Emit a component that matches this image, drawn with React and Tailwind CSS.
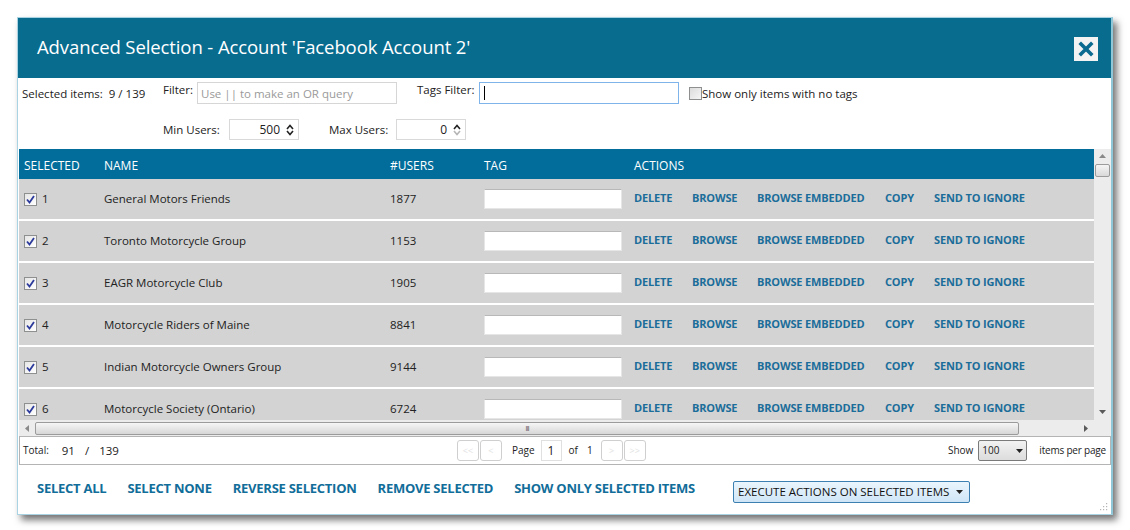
import { useState } from 'react';

const ROWS = [
  { id: 1, name: 'General Motors Friends', users: 1877 },
  { id: 2, name: 'Toronto Motorcycle Group', users: 1153 },
  { id: 3, name: 'EAGR Motorcycle Club', users: 1905 },
  { id: 4, name: 'Motorcycle Riders of Maine', users: 8841 },
  { id: 5, name: 'Indian Motorcycle Owners Group', users: 9144 },
  { id: 6, name: 'Motorcycle Society (Ontario)', users: 6724 },
];
const ACTIONS = [
  { label: 'DELETE', w: 'w-[58px]' },
  { label: 'BROWSE', w: 'w-[65px]' },
  { label: 'BROWSE EMBEDDED', w: 'w-[128px]' },
  { label: 'COPY', w: 'w-[49px]' },
  { label: 'SEND TO IGNORE', w: 'w-[100px]' },
];
const FOOT_LINKS = ['SELECT ALL', 'SELECT NONE', 'REVERSE SELECTION', 'REMOVE SELECTED', 'SHOW ONLY SELECTED ITEMS'];

const font = { fontFamily: '"Open Sans", "Noto Sans", sans-serif' };

function Check() {
  return (
    <span className="w-[13px] h-[13px] border border-[#8e8f8f] bg-gradient-to-br from-[#e6e6e6] to-white flex items-center justify-center">
      <svg width="9" height="9" viewBox="0 0 9 9">
        <path d="M1 4.5 L3.5 7.5 L8 1" fill="none" stroke="#2b3a9b" strokeWidth="1.8" />
      </svg>
    </span>
  );
}

function Spinner({ value, dimDown }) {
  return (
    <div className="w-[70px] h-[21px] border border-[#d9d9d9] bg-white flex items-center justify-end pr-[4px] text-[12px] text-[#222]">
      <span className="mr-[6px]">{value}</span>
      <div className="flex flex-col items-center leading-none">
        <svg width="8" height="6" viewBox="0 0 8 6"><path d="M1 5 L4 1.5 L7 5" fill="none" stroke="#222" strokeWidth="1.6" /></svg>
        <svg width="8" height="6" viewBox="0 0 8 6"><path d="M1 1 L4 4.5 L7 1" fill="none" stroke={dimDown ? '#b5b5b5' : '#222'} strokeWidth="1.6" /></svg>
      </div>
    </div>
  );
}

function PagerBtn({ children }) {
  return (
    <span className="w-[22px] h-[21px] border border-[#cfcfcf] rounded-[3px] text-[9px] text-[#e2e2e2] flex items-center justify-center">{children}</span>
  );
}

export default function App() {
  const [tags] = useState('');
  return (
    <div className="w-[1130px] h-[530px] bg-white pt-[17px] pl-[17px] text-[#222]" style={font}>
      <div className="w-[1096px] h-[498px] border border-[#a9d3e2] border-r-2 border-r-[#8fc7d9] shadow-[4px_5px_7px_rgba(0,0,0,0.55)] bg-white flex flex-col">
        {/* Title bar */}
        <div className="h-[60px] bg-[#086c8f] flex items-center justify-between pl-[19px] pr-[13px] shrink-0">
          <h1 className="text-[18.5px] text-white tracking-[-0.1px] -mt-[3px]">Advanced Selection - Account 'Facebook Account 2'</h1>
          <button className="w-[24px] h-[24px] bg-[#f3f3f3] flex items-center justify-center mt-[1px]">
            <svg width="16" height="16" viewBox="0 0 16 16">
              <path d="M3 3 L13 13 M13 3 L3 13" stroke="#0b6a8f" strokeWidth="3.6" strokeLinecap="square" />
            </svg>
          </button>
        </div>

        {/* Filters */}
        <div className="h-[71px] shrink-0 text-[11.5px] relative">
          <div className="flex items-start pt-[4px]">
            <span className="ml-[4px] mt-[3px] w-[141px]">Selected items:&nbsp; 9 / 139</span>
            <span className="-mt-[1px] w-[34px]">Filter:</span>
            <input className="w-[200px] h-[22px] border border-[#d6d6d6] px-[3px] text-[11.5px] placeholder:text-[#9a9a9a] outline-none" placeholder="Use || to make an OR query" />
            <span className="ml-[20px] -mt-[1px] w-[62px]">Tags Filter:</span>
            <div className="w-[200px] h-[22px] border border-[#7eb4ea] pl-[4px] flex items-center">
              <span className="w-[1px] h-[14px] bg-black">{tags}</span>
            </div>
            <span className="ml-[10px] mt-[3px] flex items-center">
              <span className="w-[13px] h-[13px] border border-[#8e8f8f] bg-gradient-to-br from-[#dcdcdc] to-[#f6f6f6]" />
              <span className="text-[11.5px]">Show only items with no tags</span>
            </span>
          </div>
          <div className="flex items-center mt-[15px] ml-[145px]">
            <span className="w-[66px]">Min Users:</span>
            <Spinner value="500" />
            <span className="ml-[30px] w-[67px]">Max Users:</span>
            <Spinner value="0" dimDown />
          </div>
        </div>

        {/* Grid */}
        <div className="flex ml-[1px] h-[271px] shrink-0">
          <div className="w-[1077px] overflow-hidden">
            <div className="h-[30px] bg-[#026d9b] text-white text-[12px] flex items-center pt-[3px]">
              <span className="pl-[5px] w-[85px]">SELECTED</span>
              <span className="w-[286px]">NAME</span>
              <span className="w-[94px]">#USERS</span>
              <span className="w-[150px]">TAG</span>
              <span>ACTIONS</span>
            </div>
            {ROWS.map((r) => (
              <div key={r.id} className="h-[42px] bg-[#d3d3d3] border-b-2 border-white flex items-center text-[11.5px]">
                <span className="pl-[5px] w-[85px] flex items-center gap-[5px]"><Check />{r.id}</span>
                <span className="w-[286px]">{r.name}</span>
                <span className="w-[94px]">{r.users}</span>
                <span className="w-[150px]">
                  <span className="block w-[138px] h-[20px] bg-white border border-t-[#b8b8b8] border-[#e6e6e6]" />
                </span>
                {ACTIONS.map((a) => (
                  <span key={a.label} className={`${a.w} shrink-0 text-[11px] font-bold text-[#1b6d9a] tracking-[-0.15px] -mt-[1px]`}>{a.label}</span>
                ))}
              </div>
            ))}
          </div>
          {/* vertical scrollbar */}
          <div className="w-[17px] bg-[#ececec] flex flex-col items-center pt-[5px]">
            <svg width="7" height="4" viewBox="0 0 7 4"><path d="M0 4 L3.5 0 L7 4Z" fill="#8a8a8a" /></svg>
            <span className="mt-[6px] w-[15px] h-[13px] border border-[#9b9b9b] rounded-[2px] bg-gradient-to-b from-[#f4f4f4] to-[#d9d9d9]" />
            <div className="flex-1" />
            <svg className="mb-[6px]" width="7" height="4" viewBox="0 0 7 4"><path d="M0 0 L3.5 4 L7 0Z" fill="#5a5a5a" /></svg>
          </div>
        </div>

        {/* horizontal scrollbar */}
        <div className="h-[16px] ml-[1px] bg-[#ececec] flex items-center shrink-0">
          <svg className="ml-[6px]" width="4" height="7" viewBox="0 0 4 7"><path d="M4 0 L0 3.5 L4 7Z" fill="#8a8a8a" /></svg>
          <div className="ml-[6px] w-[984px] h-[13px] border border-[#9b9b9b] rounded-[2px] bg-gradient-to-b from-[#f6f6f6] to-[#d7d7d7] flex items-center justify-center">
            <span className="text-[8px] leading-none text-[#666] tracking-[-1px]">III</span>
          </div>
          <svg className="ml-[65px]" width="4" height="7" viewBox="0 0 4 7"><path d="M0 0 L4 3.5 L0 7Z" fill="#5a5a5a" /></svg>
        </div>

        {/* pager */}
        <div className="h-[29px] ml-[1px] border border-[#b4b4b4] flex items-center text-[10px] shrink-0">
          <span className="ml-[3px]">Total:</span>
          <span className="ml-[13px] text-[11.5px]">91</span>
          <span className="ml-[10px] text-[11.5px]">/</span>
          <span className="ml-[10px] text-[11.5px]">139</span>
          <div className="ml-[338px] flex items-center gap-[1px]">
            <PagerBtn>&lt;&lt;</PagerBtn>
            <PagerBtn>&lt;</PagerBtn>
          </div>
          <span className="ml-[10px]">Page</span>
          <span className="ml-[6px] w-[21px] h-[21px] border border-[#e0e0e0] text-[12px] flex items-center justify-center">1</span>
          <span className="ml-[7px]">of</span>
          <span className="ml-[9px]">1</span>
          <div className="ml-[8px] flex items-center gap-[1px]">
            <PagerBtn>&gt;</PagerBtn>
            <PagerBtn>&gt;&gt;</PagerBtn>
          </div>
          <span className="ml-auto mr-[5px]">Show</span>
          <span className="w-[49px] h-[21px] border border-[#7a7a7a] rounded-[2px] bg-gradient-to-b from-[#f2f2f2] to-[#dcdcdc] flex items-center justify-between px-[3px] text-[10px]">
            100
            <svg width="7" height="4" viewBox="0 0 7 4"><path d="M0 0 L3.5 4 L7 0Z" fill="#222" /></svg>
          </span>
          <span className="ml-[12px] mr-[4px] tracking-[-0.2px]">items per page</span>
        </div>

        {/* footer actions */}
        <div className="flex-1 flex items-start pt-[14px] pl-[19px] relative">
          {FOOT_LINKS.map((l) => (
            <span key={l} className="mr-[21px] text-[13px] font-bold text-[#116d99] tracking-[-0.25px]">{l}</span>
          ))}
          <span className="ml-[17px] mt-[2px] w-[237px] h-[22px] border border-[#3c7fb1] rounded-[2px] bg-gradient-to-b from-[#eaf5fd] to-[#cfe6f7] flex items-center justify-between px-[4px] text-[11.5px] text-[#111]">
            EXECUTE ACTIONS ON SELECTED ITEMS
            <svg className="mr-[2px]" width="7" height="4" viewBox="0 0 7 4"><path d="M0 0 L3.5 4 L7 0Z" fill="#222" /></svg>
          </span>
          <svg className="absolute right-[3px] bottom-[3px]" width="9" height="9" viewBox="0 0 9 9">
            <g fill="#b5b5b5">
              <rect x="7" y="1" width="1.2" height="1.2" /><rect x="4" y="4" width="1.2" height="1.2" /><rect x="7" y="4" width="1.2" height="1.2" />
              <rect x="1" y="7" width="1.2" height="1.2" /><rect x="4" y="7" width="1.2" height="1.2" /><rect x="7" y="7" width="1.2" height="1.2" />
            </g>
          </svg>
        </div>
      </div>
    </div>
  );
}
